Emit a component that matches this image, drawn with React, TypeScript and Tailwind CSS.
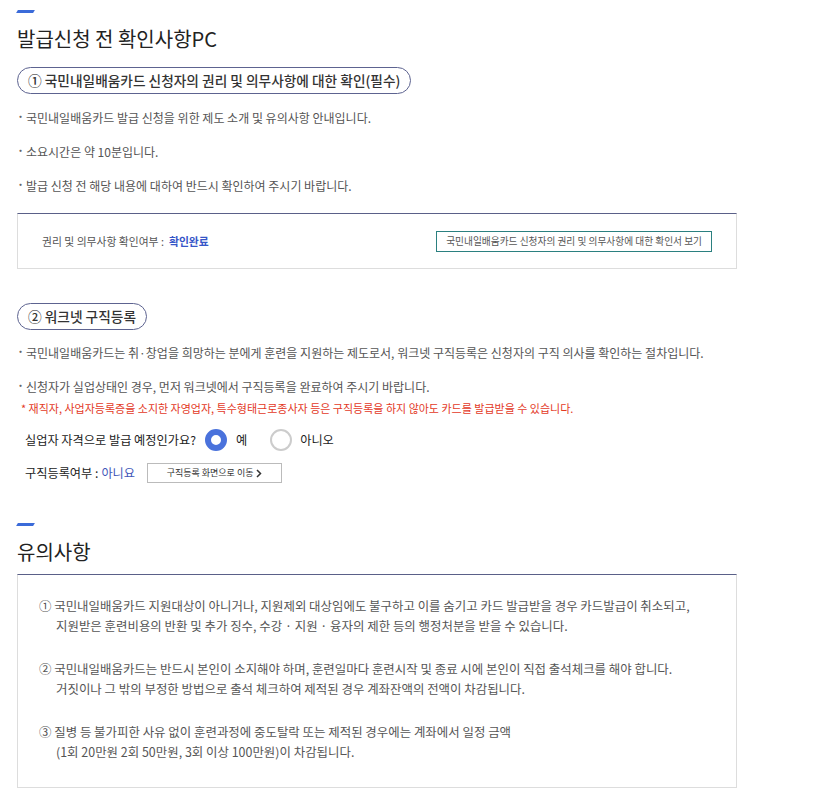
import React from "react";

const font = { fontFamily: '"Noto Sans CJK KR", "Noto Sans", sans-serif' };

function SectionTitle({ title }: { title: string }) {
  return (
    <div>
      <div className="h-[3px] w-[17px] bg-[#3b6bd9] -skew-x-[30deg]" />
      <h2 className="mt-[14px] text-[20px] leading-[24px] text-[#222]">{title}</h2>
    </div>
  );
}

function Pill({ children }: { children: React.ReactNode }) {
  return (
    <div className="inline-flex h-[27px] items-center rounded-full border border-[#5d6390] px-[10px] text-[13.7px] font-medium text-[#333]">
      {children}
    </div>
  );
}

function Bullet({ children }: { children: React.ReactNode }) {
  return (
    <li className="flex items-start text-[12px] leading-[18px] text-[#555]">
      <span className="w-[9px] shrink-0 text-[12px] leading-[14px] font-bold text-[#666]">·</span>
      <span>{children}</span>
    </li>
  );
}

export default function App() {
  const notices = [
    [
      "① 국민내일배움카드 지원대상이 아니거나, 지원제외 대상임에도 불구하고 이를 숨기고 카드 발급받을 경우 카드발급이 취소되고,",
      "지원받은 훈련비용의 반환 및 추가 징수, 수강 · 지원 · 융자의 제한 등의 행정처분을 받을 수 있습니다.",
    ],
    [
      "② 국민내일배움카드는 반드시 본인이 소지해야 하며, 훈련일마다 훈련시작 및 종료 시에 본인이 직접 출석체크를 해야 합니다.",
      "거짓이나 그 밖의 부정한 방법으로 출석 체크하여 제적된 경우 계좌잔액의 전액이 차감됩니다.",
    ],
    [
      "③ 질병 등 불가피한 사유 없이 훈련과정에 중도탈락 또는 제적된 경우에는 계좌에서 일정 금액",
      "(1회 20만원 2회 50만원, 3회 이상 100만원)이 차감됩니다.",
    ],
  ];

  return (
    <div className="min-h-screen bg-white" style={font}>
      <div className="w-[720px] ml-[17px] pt-[10px] pb-[12px]">
        <SectionTitle title="발급신청 전 확인사항PC" />

        <div className="mt-[16px]">
          <Pill>① 국민내일배움카드 신청자의 권리 및 의무사항에 대한 확인(필수)</Pill>
        </div>
        <ul className="mt-[15px] flex flex-col gap-[16px]">
          <Bullet>국민내일배움카드 발급 신청을 위한 제도 소개 및 유의사항 안내입니다.</Bullet>
          <Bullet>소요시간은 약 10분입니다.</Bullet>
          <Bullet>발급 신청 전 해당 내용에 대하여 반드시 확인하여 주시기 바랍니다.</Bullet>
        </ul>

        <div className="mt-[18px] h-[56px] border border-[#ddd] border-t-[#5a6088] flex items-center pl-[24px] pr-[24px]">
          <span className="text-[10.8px] text-[#555]">권리 및 의무사항 확인여부 :</span>
          <span className="ml-[5px] text-[10.8px] font-bold text-[#3656c8]">확인완료</span>
          <button className="ml-auto h-[21px] border border-[#2b8080] px-[9px] text-[9.7px] text-[#555]">
            국민내일배움카드 신청자의 권리 및 의무사항에 대한 확인서 보기
          </button>
        </div>

        <div className="mt-[34px]">
          <Pill>② 워크넷 구직등록</Pill>
        </div>
        <ul className="mt-[14px] flex flex-col gap-[16px]">
          <Bullet>국민내일배움카드는 취·창업을 희망하는 분에게 훈련을 지원하는 제도로서, 워크넷 구직등록은 신청자의 구직 의사를 확인하는 절차입니다.</Bullet>
          <Bullet>신청자가 실업상태인 경우, 먼저 워크넷에서 구직등록을 완료하여 주시기 바랍니다.</Bullet>
        </ul>
        <p className="mt-[4px] pl-[4px] text-[11px] leading-[16px] text-[#e3391f]">
          * 재직자, 사업자등록증을 소지한 자영업자, 특수형태근로종사자 등은 구직등록을 하지 않아도 카드를 발급받을 수 있습니다.
        </p>

        <div className="mt-[13px] pl-[8px] flex items-center text-[12.2px] text-[#222]">
          <span>실업자 자격으로 발급 예정인가요?</span>
          <span className="ml-[9px] w-[22px] h-[22px] rounded-full border-[6px] border-[#4a72dc] bg-white" />
          <span className="ml-[9px]">예</span>
          <span className="ml-[23px] w-[22px] h-[22px] rounded-full border-2 border-[#ccc] bg-white" />
          <span className="ml-[8px]">아니오</span>
        </div>

        <div className="mt-[12px] pl-[8px] flex items-center text-[12.2px] text-[#222]">
          <span>구직등록여부 :</span>
          <span className="ml-[3px] text-[#4257b9]">아니요</span>
          <button className="ml-[12px] h-[20px] w-[135px] border border-[#bbb] text-[9px] text-[#333] flex items-center justify-center gap-[3px]">
            구직등록 화면으로 이동
            <svg width="6" height="9" viewBox="0 0 6 9" fill="none">
              <path d="M1 1l3.5 3.5L1 8" stroke="#333" strokeWidth="1.5" />
            </svg>
          </button>
        </div>

        <div className="mt-[40px]">
          <SectionTitle title="유의사항" />
        </div>

        <div className="mt-[10px] border border-[#ddd] border-t-[#5a6088] pl-[21px] pt-[21px] pb-[25px] flex flex-col gap-[23px]">
          {notices.map((n, i) => (
            <div key={i} className="text-[12.45px] leading-[20px] text-[#555]">
              <div>{n[0]}</div>
              <div className="pl-[17px]">{n[1]}</div>
            </div>
          ))}
        </div>
      </div>
    </div>
  );
}
